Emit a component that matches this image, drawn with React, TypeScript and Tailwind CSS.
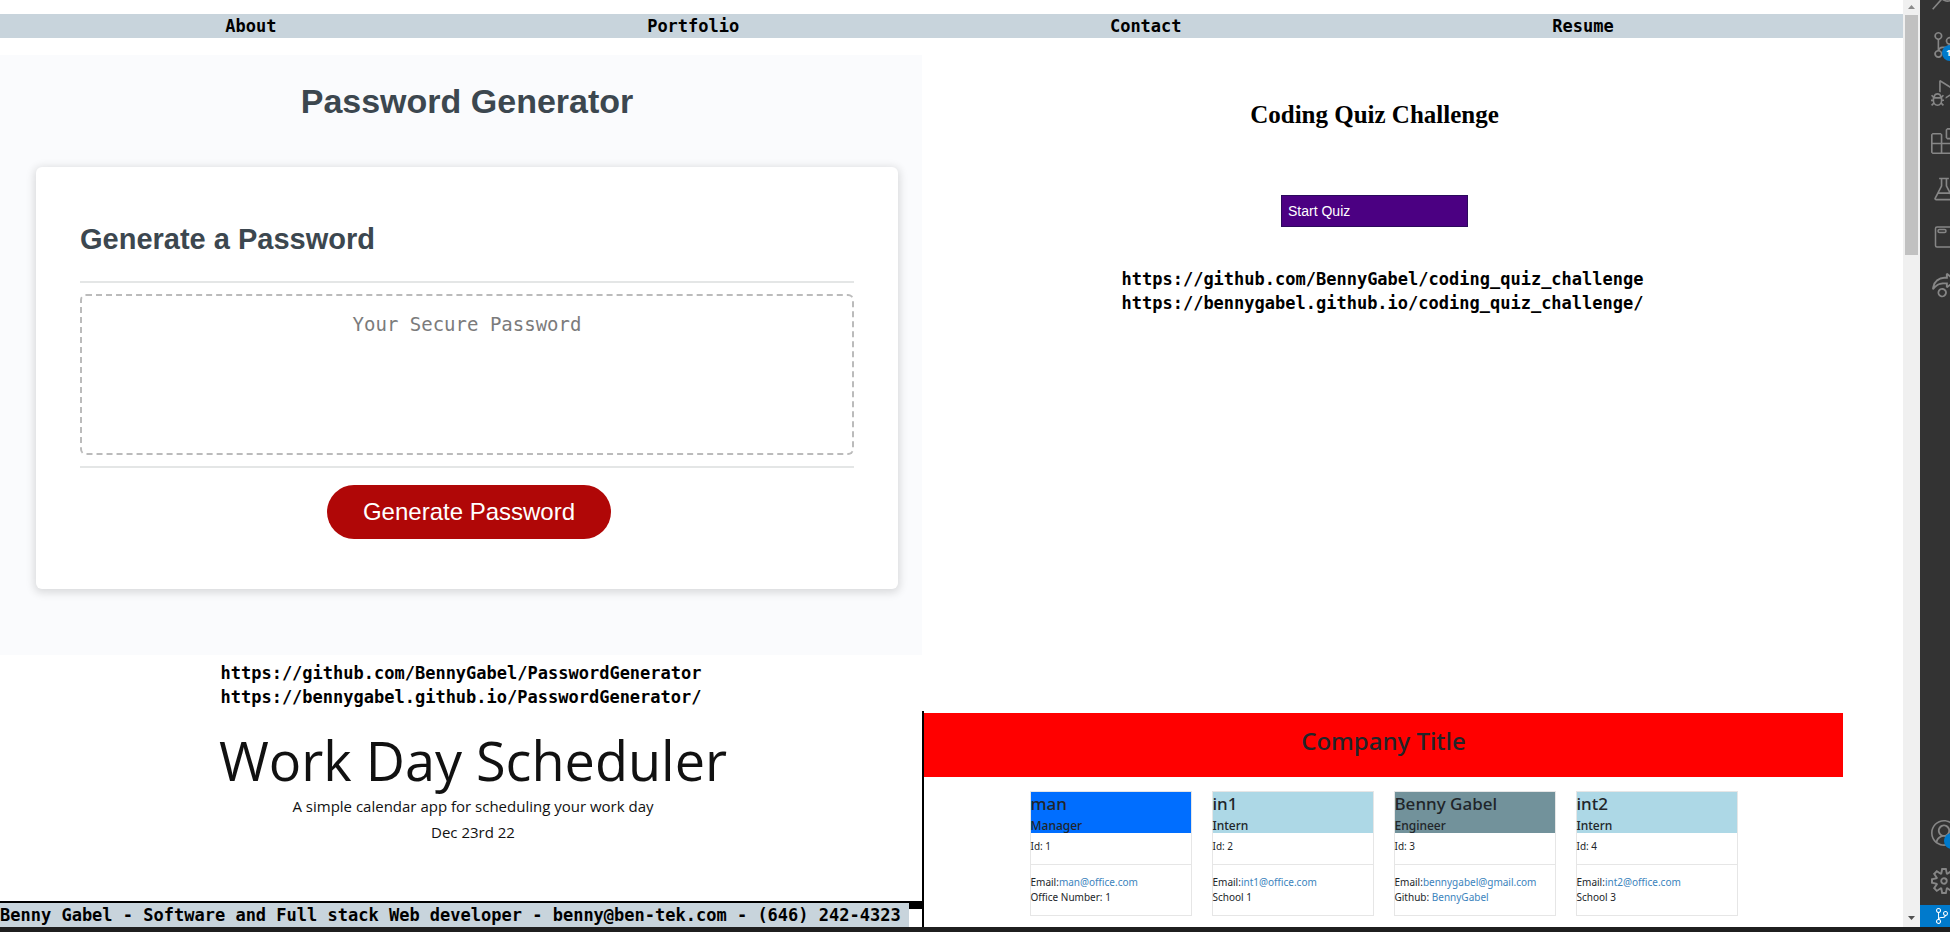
import type { ReactNode } from "react";
import {
  VscAccount,
  VscBeaker,
  VscDebugAlt,
  VscExtensions,
  VscLiveShare,
  VscSearch,
  VscSettingsGear,
  VscSourceControl,
} from "react-icons/vsc";

const navItems = ["About", "Portfolio", "Contact", "Resume"];

const team = [
  { name: "man", role: "Manager", id: 1, email: "man@office.com", label: "Office Number: 1", link: "", head: "bg-[#006eff]" },
  { name: "in1", role: "Intern", id: 2, email: "int1@office.com", label: "School 1", link: "", head: "bg-[#add8e6]" },
  { name: "Benny Gabel", role: "Engineer", id: 3, email: "bennygabel@gmail.com", label: "Github: ", link: "BennyGabel", head: "bg-[#72929b]" },
  { name: "int2", role: "Intern", id: 4, email: "int2@office.com", label: "School 3", link: "", head: "bg-[#add8e6]" },
];

function ProjectLinks({ urls }: { urls: string[] }) {
  return (
    <div className="flex flex-col items-center text-[17px] leading-6 font-bold">
      {urls.map((url) => (
        <a key={url} href={url}>
          {url}
        </a>
      ))}
    </div>
  );
}

function PasswordGenerator() {
  return (
    <div className="bg-[#fafbfd] pt-6 pr-6 pb-[66px] pl-9 font-['Liberation_Sans',sans-serif] text-[#3c474f]">
      <h1 className="text-center text-[34px] leading-11 font-bold">Password Generator</h1>
      <section className="mt-11 rounded-md bg-white px-11 pt-12 pb-[50px] shadow-[0_2px_8px_2px_rgba(0,0,0,0.13)]">
        <h2 className="text-[29px] leading-12 font-bold">Generate a Password</h2>
        <hr className="mt-[18px] border-t-2 border-[#e4e6e6]" />
        <textarea
          readOnly
          aria-label="Your Secure Password"
          placeholder="Your Secure Password"
          className="mt-[11px] block h-[161px] w-full resize-none rounded-md border-2 border-dashed border-[#bbbbbb] pt-3.5 text-center font-['DejaVu_Sans_Mono',monospace] text-[19px] leading-7 placeholder:text-[#7b7b7b]"
        />
        <hr className="mt-[11px] border-t-2 border-[#e4e6e6]" />
        <div className="mt-[17px] flex justify-center pl-1">
          <button type="button" className="h-[54px] rounded-full bg-[#b00707] px-9 text-2xl text-white">
            Generate Password
          </button>
        </div>
      </section>
    </div>
  );
}

function CodingQuiz() {
  return (
    <div className="flex flex-col items-center pt-11 pr-4 text-black">
      <h2 className="font-['Liberation_Serif',serif] text-[25px] leading-8 font-bold">Coding Quiz Challenge</h2>
      <button
        type="button"
        className="mt-16 h-8 w-[187px] border border-[#2b0a5c] bg-[#4b0082] px-1.5 text-left font-['Liberation_Sans',sans-serif] text-sm text-white"
      >
        Start Quiz
      </button>
    </div>
  );
}

function Scheduler() {
  return (
    <div className="flex flex-col items-center border-b-8 border-black pt-[18px] pb-14 pl-6 font-['Open_Sans',sans-serif] text-[#111111]">
      <h2 className="text-[54px] leading-[66px] font-normal">Work Day Scheduler</h2>
      <p className="text-[15px] leading-[26px]">A simple calendar app for scheduling your work day</p>
      <p className="text-[15px] leading-[26px]">Dec 23rd 22</p>
    </div>
  );
}

function Team() {
  return (
    <div className="h-[216px] border-l-2 border-black bg-white pt-0.5 font-['Noto_Sans',sans-serif] text-[#212529]">
      <h2 className="bg-[#ff0000] pt-3 pb-5 text-center text-2xl leading-8 font-medium">Company Title</h2>
      <div className="mt-3.5 flex justify-center gap-5">
        {team.map((m) => (
          <article key={m.name} className="w-[162px] border border-[#e6e6e6] text-[10px] leading-[15px]">
            <header className={`h-[41px] ${m.head}`}>
              <h3 className="text-[17px] leading-6 font-medium">{m.name}</h3>
              <p className="text-xs leading-5 font-medium">{m.role}</p>
            </header>
            <p className="border-b border-[#e6e6e6] pt-1.5 pb-2.5">Id: {m.id}</p>
            <div className="py-2.5">
              <p>
                Email:
                <a className="text-[#3b83bd]" href={`mailto:${m.email}`}>
                  {m.email}
                </a>
              </p>
              <p>
                {m.label}
                {m.link && (
                  <a className="text-[#3b83bd]" href="https://github.com/BennyGabel">
                    {m.link}
                  </a>
                )}
              </p>
            </div>
          </article>
        ))}
      </div>
    </div>
  );
}

function ScrollBar() {
  return (
    <div className="flex w-[17px] shrink-0 flex-col items-center bg-[#f0f0f0]">
      <svg viewBox="0 0 17 15" className="h-[15px] w-[17px]" aria-hidden="true">
        <path d="M5 9h7L8.500 5z" fill="#8a8a8a" />
      </svg>
      <div className="h-60 w-[13px] bg-[#c1c1c1]" />
      <svg viewBox="0 0 17 17" className="mt-auto h-[17px] w-[17px]" aria-hidden="true">
        <path d="M5 6h7L8.500 10z" fill="#505050" />
      </svg>
    </div>
  );
}

function ActivityItem({ label, children }: { label: string; children: ReactNode }) {
  return (
    <button type="button" aria-label={label} className="relative flex size-12 items-center justify-center">
      {children}
    </button>
  );
}

function ActivityBar() {
  return (
    <aside className="flex w-[30px] shrink-0 flex-col overflow-hidden bg-[#333333] text-[#868686]">
      <div className="-mt-[27px] flex w-12 flex-1 flex-col">
        <ActivityItem label="Search">
          <VscSearch size={26} />
        </ActivityItem>
        <ActivityItem label="Source control">
          <VscSourceControl size={26} />
          <span className="absolute top-6 left-[22px] size-4 rounded-full bg-[#007acc] pl-1 text-left font-['Open_Sans',sans-serif] text-[9px] leading-4 font-bold text-white">
            1
          </span>
        </ActivityItem>
        <ActivityItem label="Run and debug">
          <VscDebugAlt size={26} />
        </ActivityItem>
        <ActivityItem label="Extensions">
          <VscExtensions size={26} />
        </ActivityItem>
        <ActivityItem label="Testing">
          <VscBeaker size={26} />
        </ActivityItem>
        <ActivityItem label="Notebook">
          <svg width="24" height="24" viewBox="0 0 24 24" fill="none" stroke="currentColor" strokeWidth="1.5" aria-hidden="true">
            <rect x="3.500" y="2" width="18" height="20" rx="1.500" />
            <rect x="6" y="4.500" width="8" height="3" rx="1.500" />
          </svg>
        </ActivityItem>
        <ActivityItem label="Live share">
          <VscLiveShare size={26} />
        </ActivityItem>
        <div className="mt-auto">
          <ActivityItem label="Account">
            <VscAccount size={26} />
            <span className="absolute top-6 left-6 size-4 rounded-full bg-[#007acc]" />
          </ActivityItem>
        </div>
        <ActivityItem label="Settings">
          <VscSettingsGear size={26} />
        </ActivityItem>
      </div>
      <div className="flex h-[22px] items-center bg-[#007acc] pl-3.5 text-white">
        <VscSourceControl size={16} className="shrink-0" />
      </div>
    </aside>
  );
}

export default function App() {
  return (
    <div className="flex h-screen flex-col bg-[#1f1f1f]">
      <div className="flex min-h-0 flex-1">
        <div className="relative min-w-0 flex-1 overflow-hidden bg-white font-['DejaVu_Sans_Mono',monospace] text-black">
          <nav className="mt-3.5 flex justify-around bg-[#c8d4dc] pr-[104px] pl-10 text-[17px] leading-6 font-bold">
            {navItems.map((item) => (
              <a key={item} href={`#${item.toLowerCase()}`}>
                {item}
              </a>
            ))}
          </nav>
          <main className="mt-[17px] grid grid-cols-[922fr_921fr_60fr] items-start">
            <div>
              <PasswordGenerator />
              <div className="pt-1.5">
                <ProjectLinks
                  urls={[
                    "https://github.com/BennyGabel/PasswordGenerator",
                    "https://bennygabel.github.io/PasswordGenerator/",
                  ]}
                />
              </div>
              <Scheduler />
            </div>
            <div>
              <div className="h-[656px]">
                <CodingQuiz />
                <div className="mt-10">
                  <ProjectLinks
                    urls={[
                      "https://github.com/BennyGabel/coding_quiz_challenge",
                      "https://bennygabel.github.io/coding_quiz_challenge/",
                    ]}
                  />
                </div>
              </div>
              <Team />
            </div>
          </main>
          <footer className="absolute bottom-0 left-0 bg-[#c8d4dc] pr-2 text-[17px] leading-6 font-bold whitespace-nowrap">
            Benny Gabel - Software and Full stack Web developer - benny@ben-tek.com - (646) 242-4323
          </footer>
        </div>
        <ScrollBar />
        <ActivityBar />
      </div>
      <div className="h-[5px] shrink-0" />
    </div>
  );
}
